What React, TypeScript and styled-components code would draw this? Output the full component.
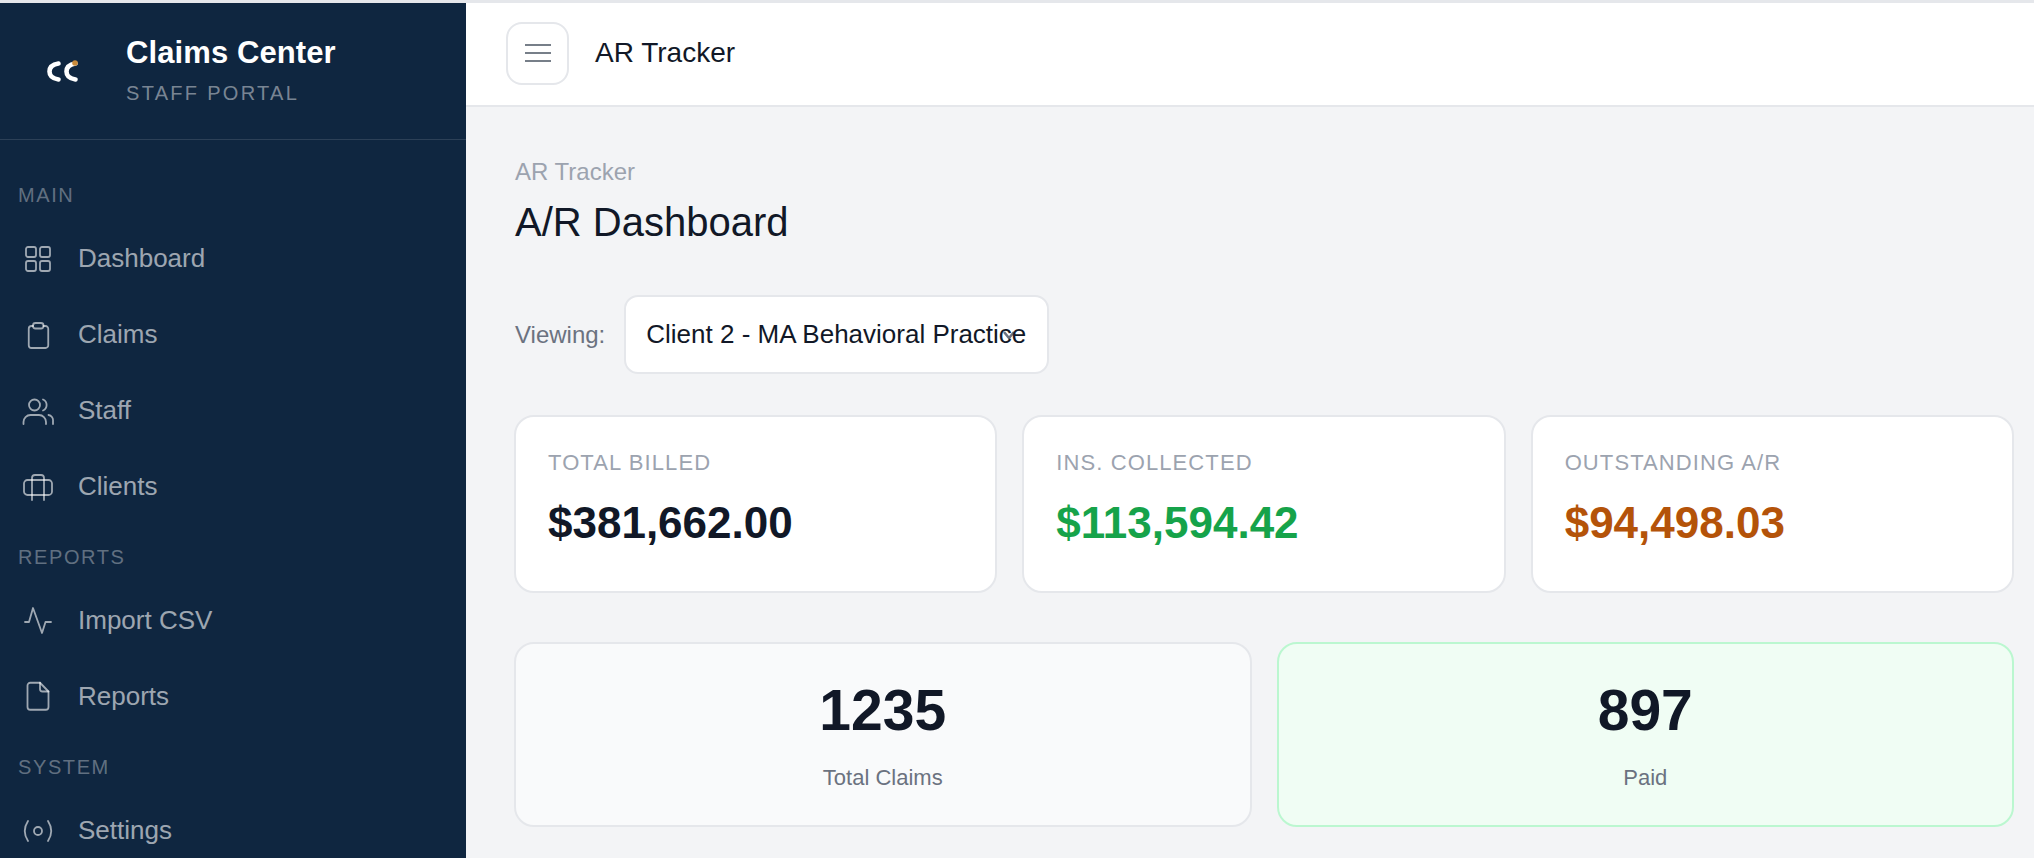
import React from 'react';
import styled, { createGlobalStyle } from 'styled-components';

const GlobalStyle = createGlobalStyle`
  html, body {
    margin: 0;
    padding: 0;
    height: 100%;
    overflow: hidden;
    background: #f3f4f6;
    font-family: "Liberation Sans", Arial, sans-serif;
  }
  * {
    box-sizing: border-box;
  }
`;

const Page = styled.div`
  height: 858px;
  display: flex;
  flex-direction: column;
  overflow: hidden;
  border-top: 3px solid #e5e7eb;
`;

const Shell = styled.div`
  flex: 1;
  display: flex;
  min-height: 0;
`;

const Sidebar = styled.aside`
  width: 466px;
  flex-shrink: 0;
  background: #0f2640;
  overflow: hidden;
`;

const Brand = styled.div`
  height: 137px;
  display: flex;
  align-items: center;
  gap: 46px;
  padding-left: 44px;
  border-bottom: 1px solid rgba(255, 255, 255, 0.12);
`;

const BrandText = styled.div`
  display: flex;
  flex-direction: column;
  gap: 5px;
  margin-bottom: 2px;
`;

const BrandName = styled.div`
  font-size: 31px;
  line-height: 40px;
  font-weight: 700;
  letter-spacing: 0.1px;
  color: #fff;
`;

const BrandSub = styled.div`
  font-size: 20px;
  line-height: 30px;
  letter-spacing: 2.3px;
  color: rgba(255, 255, 255, 0.45);
`;

const Nav = styled.nav`
  padding-top: 22px;
`;

const SectionLabel = styled.div`
  padding: 20px 0 12px 18px;
  font-size: 20px;
  line-height: 26px;
  letter-spacing: 1.6px;
  color: rgba(255, 255, 255, 0.35);
`;

const NavItem = styled.a`
  height: 76px;
  display: flex;
  align-items: center;
  gap: 24px;
  padding-left: 22px;
  font-size: 26px;
  color: rgba(255, 255, 255, 0.6);
`;

const NavIcon = styled.svg`
  width: 32px;
  height: 32px;
  flex-shrink: 0;
  fill: none;
  stroke: currentColor;
  stroke-width: 1.8;
  stroke-linecap: round;
  stroke-linejoin: round;
`;

const Main = styled.main`
  flex: 1;
  min-width: 0;
  display: flex;
  flex-direction: column;
`;

const Header = styled.header`
  height: 104px;
  flex-shrink: 0;
  display: flex;
  align-items: center;
  gap: 26px;
  padding: 0 40px 2px;
  background: #fff;
  border-bottom: 2px solid #e5e7eb;
`;

const MenuButton = styled.button`
  width: 63px;
  height: 63px;
  display: flex;
  align-items: center;
  justify-content: center;
  padding: 0;
  background: #fff;
  border: 2px solid #e5e7eb;
  border-radius: 16px;
  color: #4b5563;
`;

const HeaderTitle = styled.div`
  font-size: 28px;
  color: #111827;
`;

const Content = styled.div`
  flex: 1;
  padding: 50px 20px 0 48px;
`;

const Breadcrumb = styled.div`
  padding-left: 1px;
  font-size: 24px;
  line-height: 30px;
  color: #9ca3af;
`;

const Title = styled.h1`
  margin: 10px 0 0;
  padding-left: 1px;
  font-size: 40px;
  line-height: 50px;
  font-weight: 400;
  color: #111827;
`;

const ViewingRow = styled.div`
  margin-top: 48px;
  padding-left: 1px;
  display: flex;
  align-items: center;
  gap: 19px;
`;

const ViewingLabel = styled.span`
  font-size: 24px;
  color: #6b7280;
`;

const SelectBox = styled.div`
  position: relative;
  width: 425px;
  height: 79px;
  display: flex;
  align-items: center;
  padding-left: 20px;
  background: #fff;
  border: 2px solid #e5e7eb;
  border-radius: 14px;
  font-size: 26px;
  color: #111827;
  white-space: nowrap;
`;

const SelectText = styled.span`
  position: relative;
`;

const Chevron = styled.svg`
  position: absolute;
  right: 32px;
  top: 33px;
  width: 12px;
  height: 10px;
  fill: none;
  stroke: #6b7280;
  stroke-width: 2.5;
`;

const SummaryGrid = styled.div`
  margin-top: 41px;
  display: grid;
  grid-template-columns: repeat(3, 1fr);
  gap: 25px;
`;

const SummaryCard = styled.div`
  height: 178px;
  padding: 31px 32px 0;
  background: #fff;
  border: 2px solid #e5e7eb;
  border-radius: 20px;
`;

const SummaryLabel = styled.div`
  font-size: 22px;
  line-height: 30px;
  letter-spacing: 1.1px;
  color: #9ca3af;
`;

const SummaryValue = styled.div<{ $color: string }>`
  margin-top: 20px;
  font-size: 44px;
  line-height: 50px;
  font-weight: 700;
  color: ${(p) => p.$color};
`;

const StatGrid = styled.div`
  margin-top: 49px;
  display: grid;
  grid-template-columns: repeat(2, 1fr);
  gap: 25px;
`;

const StatCard = styled.div<{ $paid?: boolean }>`
  height: 185px;
  padding-top: 34px;
  text-align: center;
  background: ${(p) => (p.$paid ? '#f0fdf4' : '#f9fafb')};
  border: 2px solid ${(p) => (p.$paid ? '#bbf7d0' : '#e5e7eb')};
  border-radius: 20px;
`;

const StatValue = styled.div`
  font-size: 57px;
  line-height: 64px;
  font-weight: 700;
  color: #111827;
`;

const StatLabel = styled.div`
  margin-top: 21px;
  font-size: 22px;
  line-height: 30px;
  color: #6b7280;
`;

const LogoMark = styled.svg`
  flex-shrink: 0;
  width: 36px;
  height: 27px;
  fill: none;
  stroke: #fff;
  stroke-width: 4.6;
  stroke-linecap: round;
`;

function Logo() {
  return (
    <LogoMark viewBox="0 0 36 27">
      <path d="M14.5 5.5C8 6.5 5.5 10 5.5 13.5C5.5 17 8 20.5 14.5 21.5" />
      <path d="M31.5 5.5C25 6.5 22.5 10 22.5 13.5C22.5 17 25 20.5 31.5 21.5" />
      <circle cx="31" cy="5" r="2.8" fill="#c98a3a" stroke="none" />
    </LogoMark>
  );
}

const icons: Record<string, React.ReactNode> = {
  dashboard: (
    <>
      <rect x="4" y="5" width="10" height="10" rx="2" />
      <rect x="18" y="5" width="10" height="10" rx="2" />
      <rect x="4" y="19" width="10" height="10" rx="2" />
      <rect x="18" y="19" width="10" height="10" rx="2" />
    </>
  ),
  claims: (
    <>
      <path d="M11 8H9.5A2.75 2.75 0 0 0 6.75 10.75V27.25A2.75 2.75 0 0 0 9.5 30H23.5A2.75 2.75 0 0 0 26.25 27.25V10.75A2.75 2.75 0 0 0 23.5 8H21.5" />
      <rect x="11" y="5" width="10.5" height="5.5" rx="2.5" />
    </>
  ),
  staff: (
    <>
      <circle cx="12.5" cy="11" r="5.5" />
      <path d="M21 5.5A6 6 0 0 1 21 16.5" />
      <path d="M1.5 30V28A7 7 0 0 1 8.5 21H17A7 7 0 0 1 24 28V30" />
      <path d="M26.5 21A5.5 5.5 0 0 1 31 27V30" />
    </>
  ),
  clients: (
    <>
      <rect x="2" y="10" width="28" height="15" rx="3.5" />
      <path d="M10 30V8A3 3 0 0 1 13 5H19A3 3 0 0 1 22 8V30" />
    </>
  ),
  activity: <path d="M3 18H7L11 4L20 29L23.5 18H29" />,
  file: (
    <>
      <path d="M8.25 2.75H18L26.5 11.5V27A2.75 2.75 0 0 1 23.75 29.75H8.25A2.75 2.75 0 0 1 5.5 27V5.5A2.75 2.75 0 0 1 8.25 2.75Z" />
      <path d="M18 2.75V9A2.5 2.5 0 0 0 20.5 11.5H26.5" />
    </>
  ),
  settings: (
    <>
      <circle cx="16" cy="17" r="4" />
      <path d="M6 7Q-0.5 17 6 27" />
      <path d="M26 7Q32.5 17 26 27" />
    </>
  ),
};

const navSections = [
  {
    label: 'MAIN',
    items: [
      { name: 'Dashboard', icon: 'dashboard' },
      { name: 'Claims', icon: 'claims' },
      { name: 'Staff', icon: 'staff' },
      { name: 'Clients', icon: 'clients' },
    ],
  },
  {
    label: 'REPORTS',
    items: [
      { name: 'Import CSV', icon: 'activity' },
      { name: 'Reports', icon: 'file' },
    ],
  },
  {
    label: 'SYSTEM',
    items: [{ name: 'Settings', icon: 'settings' }],
  },
];

const summary = [
  { label: 'TOTAL BILLED', value: '$381,662.00', color: '#111827' },
  { label: 'INS. COLLECTED', value: '$113,594.42', color: '#16a34a' },
  { label: 'OUTSTANDING A/R', value: '$94,498.03', color: '#b45309' },
];

export default function App() {
  return (
    <>
      <GlobalStyle />
      <Page>
        <Shell>
          <Sidebar>
            <Brand>
              <Logo />
              <BrandText>
                <BrandName>Claims Center</BrandName>
                <BrandSub>STAFF PORTAL</BrandSub>
              </BrandText>
            </Brand>
            <Nav>
              {navSections.map((section) => (
                <div key={section.label}>
                  <SectionLabel>{section.label}</SectionLabel>
                  {section.items.map((item) => (
                    <NavItem key={item.name}>
                      <NavIcon viewBox="0 0 32 32">{icons[item.icon]}</NavIcon>
                      {item.name}
                    </NavItem>
                  ))}
                </div>
              ))}
            </Nav>
          </Sidebar>
          <Main>
            <Header>
              <MenuButton>
                <svg width="26" height="20" viewBox="0 0 26 20" stroke="currentColor" strokeWidth="1.7">
                  <path d="M0 2H26M0 10H26M0 18H26" />
                </svg>
              </MenuButton>
              <HeaderTitle>AR Tracker</HeaderTitle>
            </Header>
            <Content>
              <Breadcrumb>AR Tracker</Breadcrumb>
              <Title>A/R Dashboard</Title>
              <ViewingRow>
                <ViewingLabel>Viewing:</ViewingLabel>
                <SelectBox>
                  <Chevron viewBox="0 0 12 10">
                    <path d="M1 2L6 8L11 2" />
                  </Chevron>
                  <SelectText>Client 2 - MA Behavioral Practice</SelectText>
                </SelectBox>
              </ViewingRow>
              <SummaryGrid>
                {summary.map((card) => (
                  <SummaryCard key={card.label}>
                    <SummaryLabel>{card.label}</SummaryLabel>
                    <SummaryValue $color={card.color}>{card.value}</SummaryValue>
                  </SummaryCard>
                ))}
              </SummaryGrid>
              <StatGrid>
                <StatCard>
                  <StatValue>1235</StatValue>
                  <StatLabel>Total Claims</StatLabel>
                </StatCard>
                <StatCard $paid>
                  <StatValue>897</StatValue>
                  <StatLabel>Paid</StatLabel>
                </StatCard>
              </StatGrid>
            </Content>
          </Main>
        </Shell>
      </Page>
    </>
  );
}
